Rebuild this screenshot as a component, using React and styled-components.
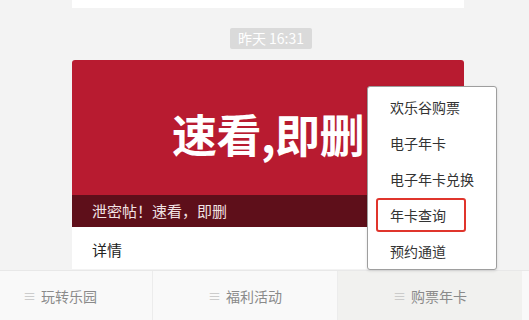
import styled, { createGlobalStyle } from 'styled-components';

const GlobalStyle = createGlobalStyle`
  html, body {
    margin: 0;
    padding: 0;
    background: #f3f3f3;
    overflow: hidden;
    font-family: "Noto Sans CJK SC", "Noto Sans", sans-serif;
  }
`;

const menuItems = ['欢乐谷购票', '电子年卡', '电子年卡兑换', '年卡查询', '预约通道'];
const tabs = ['玩转乐园', '福利活动', '购票年卡'];

export default function App() {
  return (
    <Page>
      <GlobalStyle />
      <TopCard />
      <TimeRow>
        <TimeBadge>昨天 16:31</TimeBadge>
      </TimeRow>

      <Article>
        <Cover>
          <CoverTitle>速看,即删</CoverTitle>
        </Cover>
        <Caption>泄密帖！速看，即删</Caption>
        <Details>详情</Details>
      </Article>

      <TabBar>
        {tabs.map((t, i) => (
          <Tab key={t} $active={i === 2}>
            <TabIcon>≡</TabIcon>
            {t}
          </Tab>
        ))}
      </TabBar>

      <Menu>
        {menuItems.map((m, i) => (
          <MenuItem key={m}>
            <MenuLabel $boxed={i === 3}>{m}</MenuLabel>
          </MenuItem>
        ))}
      </Menu>
    </Page>
  );
}

const Page = styled.div`
  position: relative;
  width: 529px;
  height: 320px;
  display: flex;
  flex-direction: column;
`;

const TopCard = styled.div`
  margin-left: 72px;
  width: 392px;
  height: 8px;
  background: #ffffff;
`;

const TimeRow = styled.div`
  display: flex;
  justify-content: center;
  padding: 20px 0 11px;
  padding-left: 13px;
`;

const TimeBadge = styled.span`
  display: inline-flex;
  align-items: center;
  height: 21px;
  padding: 0 8px;
  border-radius: 2px;
  background: #dadada;
  color: #ffffff;
  font-size: 14px;
`;

const Article = styled.div`
  margin-left: 72px;
  width: 392px;
  background: #ffffff;
  border-radius: 3px 3px 0 0;
  overflow: hidden;
`;

const Cover = styled.div`
  height: 135px;
  background: #b81b30;
  display: flex;
  align-items: center;
  justify-content: center;
  padding-top: 12px;
  box-sizing: border-box;
`;

const CoverTitle = styled.div`
  color: #ffffff;
  font-family: "Noto Sans CJK SC", sans-serif;
  font-weight: 700;
  font-size: 45px;
  line-height: 1;
  letter-spacing: -0.5px;
`;

const Caption = styled.div`
  height: 32px;
  display: flex;
  align-items: center;
  padding-left: 20px;
  background: #5e0f1a;
  color: #f1e2e4;
  font-size: 15px;
`;

const Details = styled.div`
  height: 43px;
  display: flex;
  align-items: center;
  padding-left: 20px;
  padding-top: 3px;
  box-sizing: border-box;
  color: #222222;
  font-size: 15px;
`;

const TabBar = styled.div`
  margin-top: 1px;
  margin-left: -33px;
  display: grid;
  grid-template-columns: 185px 185px 185px 1fr;
  height: 49px;
  border-top: 1px solid #e8e8e8;
  background: #f9f9f9;
`;

const Tab = styled.div`
  display: flex;
  align-items: center;
  justify-content: center;
  gap: 5px;
  color: #8a8a8a;
  font-size: 14px;
  border-left: 1px solid #ececec;
  background: ${(p) => (p.$active ? '#f1f1ef' : '#f9f9f9')};
`;

const TabIcon = styled.span`
  color: #c4c4c4;
  font-size: 13px;
`;

const Menu = styled.div`
  position: absolute;
  left: 367px;
  top: 86px;
  width: 128px;
  padding-top: 2px;
  background: #ffffff;
  border: 1px solid #9e9e9e;
  border-radius: 3px;
  box-shadow: 0 1px 3px rgba(0, 0, 0, 0.12);
`;

const MenuItem = styled.div`
  height: 36px;
  display: flex;
  align-items: center;
  padding-left: 8px;
`;

const MenuLabel = styled.div`
  display: flex;
  align-items: center;
  height: 34px;
  width: 90px;
  box-sizing: border-box;
  padding-left: ${(p) => (p.$boxed ? '12px' : '14px')};
  border: ${(p) => (p.$boxed ? '2px solid #e0352c' : 'none')};
  border-radius: 3px;
  color: #333333;
  font-size: 14px;
  white-space: nowrap;
`;
